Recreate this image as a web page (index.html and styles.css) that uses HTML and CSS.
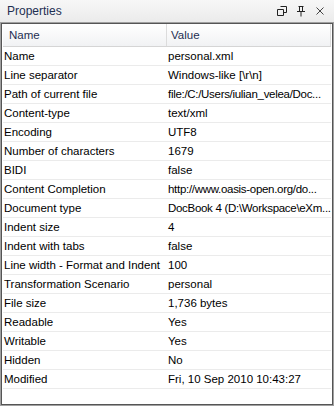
FILE: index.html
```html
<!DOCTYPE html>
<html lang="en">
<head>
  <meta charset="UTF-8" />
  <title>Properties</title>
  <link rel="stylesheet" href="styles.css">
</head>
<body>
  <div class="view">
    <div class="title-bar">
      <span class="title">Properties</span>
      <div class="title-tools">
        <svg width="12" height="12" viewBox="0 0 12 12"><path d="M1.5 4.5h6v6h-6z M4.5 1.5h6v6h-3" fill="none" stroke="#222" stroke-width="1"/></svg>
        <svg width="12" height="12" viewBox="0 0 12 12"><path d="M3.5 1.5h5 M4.5 1.5v5 M7.5 1.5v5 M2 6.5h8 M6 6.5v5" fill="none" stroke="#222" stroke-width="1"/></svg>
        <svg width="12" height="12" viewBox="0 0 12 12"><path d="M2.5 2.5l7 7 M9.5 2.5l-7 7" fill="none" stroke="#444" stroke-width="1"/></svg>
      </div>
    </div>

    <div class="panel">
      <div class="grid-head">
        <div class="head-cell name-col">Name</div>
        <div class="head-cell value-col">Value</div>
      </div>
      <div class="rows">
        <div class="row"><div class="name">Name</div><div class="value">personal.xml</div></div>
        <div class="row"><div class="name">Line separator</div><div class="value">Windows-like [\r\n]</div></div>
        <div class="row"><div class="name">Path of current file</div><div class="value tight">file:/C:/Users/iulian_velea/Doc...</div></div>
        <div class="row"><div class="name">Content-type</div><div class="value">text/xml</div></div>
        <div class="row"><div class="name">Encoding</div><div class="value">UTF8</div></div>
        <div class="row"><div class="name">Number of characters</div><div class="value">1679</div></div>
        <div class="row"><div class="name">BIDI</div><div class="value">false</div></div>
        <div class="row"><div class="name">Content Completion</div><div class="value tight">http://www.oasis-open.org/do...</div></div>
        <div class="row"><div class="name">Document type</div><div class="value tight">DocBook 4 (D:\Workspace\eXm...</div></div>
        <div class="row"><div class="name">Indent size</div><div class="value">4</div></div>
        <div class="row"><div class="name">Indent with tabs</div><div class="value">false</div></div>
        <div class="row"><div class="name">Line width - Format and Indent</div><div class="value">100</div></div>
        <div class="row"><div class="name">Transformation Scenario</div><div class="value">personal</div></div>
        <div class="row"><div class="name">File size</div><div class="value">1,736 bytes</div></div>
        <div class="row"><div class="name">Readable</div><div class="value">Yes</div></div>
        <div class="row"><div class="name">Writable</div><div class="value">Yes</div></div>
        <div class="row"><div class="name">Hidden</div><div class="value">No</div></div>
        <div class="row"><div class="name">Modified</div><div class="value">Fri, 10 Sep 2010 10:43:27</div></div>
      </div>
    </div>
  </div>
</body>
</html>
```

FILE: styles.css
```css
body {
  margin: 0;
  background: #f0f0f0;
  font-family: 'Liberation Sans', Arial, sans-serif;
  font-size: 11.5px;
  color: #000;
}
.view {
  width: 334px;
  height: 406px;
  display: flex;
  flex-direction: column;
}
.title-bar {
  height: 22px;
  display: flex;
  align-items: center;
  justify-content: space-between;
  padding: 0 8px 0 7px;
  background: linear-gradient(#f7f7f7, #ebebeb);
}
.title {
  color: #1e2f52;
  font-size: 12px;
}
.title-tools {
  display: flex;
  gap: 7px;
  align-items: center;
}
.panel {
  flex: 1;
  display: flex;
  flex-direction: column;
  background: #fff;
  border: 1px solid #a0a0a0;
  box-shadow: inset 1px 1px 0 #555, inset -1px -1px 0 #555;
  padding: 1px 2px 2px 2px;
  overflow: hidden;
}
.grid-head {
  display: flex;
  height: 22px;
  background: linear-gradient(#ffffff, #f1f2f4);
  border-bottom: 1px solid #d5d5d5;
}
.head-cell {
  display: flex;
  align-items: center;
  padding-left: 6px;
  color: #1e2f52;
  border-right: 1px solid #dcdcdc;
}
.name-col {
  width: 157px;
}
.value-col {
  flex: 1;
  padding-left: 4px;
}
.rows {
  display: flex;
  flex-direction: column;
}
.row {
  display: flex;
  height: 18px;
  align-items: center;
  border-bottom: 1px solid #ebebeb;
}
.name {
  width: 164px;
  padding-left: 1px;
  white-space: nowrap;
}
.value {
  flex: 1;
  min-width: 0;
  white-space: nowrap;
}
.tight {
  letter-spacing: -0.3px;
}
```
